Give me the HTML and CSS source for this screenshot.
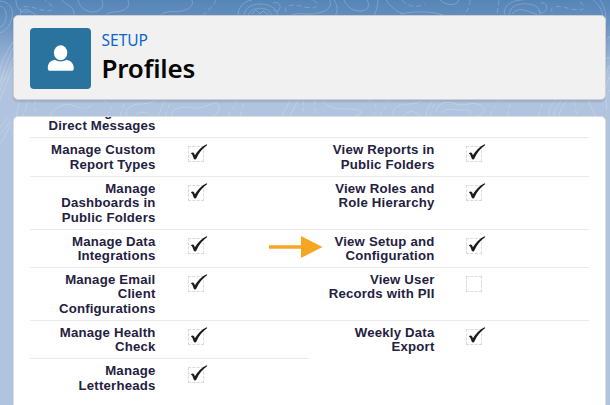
FILE: index.html
```
<!DOCTYPE html>
<html lang="en">
<head>
<meta charset="utf-8">
<title>Profiles</title>
<link rel="stylesheet" href="styles.css">
</head>
<body>
<svg class="contours" viewBox="0 0 610 405" aria-hidden="true">
  <path d="M0 6c5 1 7 7 6 12s-3 8-6 9M0 1c9 1 14 7 12 16s-5 13-12 16M16 0c0 8 4 13 12 12 5-1 7 4 11 4M20 16c1-6 5-8 10-5M78 0c2 7 6 11 14 12 7 0 13-4 10-12M62 0c4 6 13 5 12 16M13 42C7 52 2 60 0 70M13 48C8 60 4 68 0 84M13 57C9 70 5 76 0 91M13 66C9 78 5 86 0 100"/>
  <path d="M105 16c5-6 10-3 16-5 7-2 9-6 7-11M160 16c6-7 15-3 22-5 8-2 12-6 10-11M238 16c0-8 4-14 14-16M244 16c1-8 7-12 16-12s17 4 18 12M248 16c2-7 10-9 17-7 4 1 7 4 7 7M252 14l4-4 4 4 3-3 6 4M273 3c4-2 8 1 7 5s-6 5-6 1M290 16c7-5 18 0 28-3 9-2 14-5 12-13M334 0c4 6 4 11 1 16M344 0c3 7 8 11 17 11 8-1 9-6 6-11M378 0c0 7-2 11-4 16M386 0c5 7 11 13 19 14M400 14c15-3 31-3 43 1M440 0c4 5 17 7 19 0M505 16c-3-9 5-16 18-16M509 16c0-10 9-13 18-12 9 0 14 5 13 12M512 14c5-7 13-4 18-2 4 1 7 2 8 4M541 3c5-1 7 3 5 7s-8 4-7 0M593 0c6 4 9 10 10 16M600 0c6 8 7 19 5 30M610 58h-5M610 65c-3 4-4 10-5 14"/>
  <path d="M16 116c2-8 4-11 2-16M22 116c5-6 3-10 7-16M126 116c0-8 5-12 15-12 7 0 12-2 15-4M135 116c3-5 13-5 16 0M158 116c3-5 4-11 7-16M172 116c0-9 10-10 23-8 9 1 14-5 21-5 6 2 3 10-3 13M50 116c5-10 16-14 25-10 7 3 13 3 17-1M282 116c2-7 8-11 7-16M290 116c4-8 5-11 9-16M323 100c5 7 10 9 23 9 8 0 19 1 14 5l-5 2M393 116c0-8 4-11 14-12 7 0 12-1 15-4M403 116c5-6 12-6 17 0M426 116c1-6 3-12 7-16M436 112c1-9 11-12 20-8 8 3 13-2 22 0 9 3 8 12-3 12M441 113c6-7 13-2 23-3 7-1 7 2 6 6M549 116c-1-6 3-12 7-16M554 116c0-7 4-11 8-16M559 116c1-7 4-10 8-16M588 100c3 6 4 11 8 16M12 121C8 130 5 137 0 143M10 119c-2 7-6 12-10 15M7 116c-1 5-4 9-7 11M605 102c1-9 0-18 5-25M607 110c-1-9-2-15 3-20"/>
  <path class="dashed" d="M14 17c8 13 1 15-2 29M21 13c-3-8 6-7 14-5 8 3 20 5 17-2l-7-6M216 0c-2 7-8 9-13 16M286 12c-3-7 6-8 14-6 7 2 20 4 17-3l-4-3M402 0c6 7 15 8 23 4M470 0c0 8-3 11-7 16M552 12c-3-7 8-6 15-4 7 2 21 4 16-3l-4-5M499 0c-1 7-1 11-3 16M36 100c-2 6-3 9 2 16M104 100l8 8-5 8M120 116l4-12M166 116c0-6 4-10 5-16M228 116c3-8 9-9 8-16M240 116l5-16M304 100c-2 8-1 11 2 16M315 100v16M368 100c9 3 11 10 3 16M380 116c1-6 8-9 8-16M430 116c1-7 4-11 7-16M490 116c3-9 8-10 8-16M507 116l4-14M538 116c3-6 3-12 7-16M574 101l3 15M610 36c-4 5-5 10-5 14"/>
</svg>

<main class="page">
  <header class="card header">
    <div class="tile">
      <svg viewBox="0 0 61 61" aria-hidden="true"><ellipse cx="30.600" cy="24.700" rx="6.700" ry="7.500"/><path d="M17.800 40.200c0-5.400 2.700-7.400 7-8.400 3.700 2.300 7.900 2.300 11.600 0 4.300 1 7.400 3.600 7.400 8.400 0 1.600-.9 2.600-2.400 2.600H20.300c-1.600 0-2.500-1-2.500-2.600z"/></svg>
    </div>
    <div class="heading">
      <div class="eyebrow">SETUP</div>
      <h1>Profiles</h1>
    </div>
  </header>

  <section class="card panel">
    <div class="row first"><div class="cell"><span class="label">Messages and<br>Direct Messages</span></div></div>
    <div class="row">
      <div class="cell"><span class="label">Manage Custom<br>Report Types</span><span class="box"><svg viewBox="0 0 20 18"><use href="#check"/></svg></span></div>
      <div class="cell"><span class="label">View Reports in<br>Public Folders</span><span class="box"><svg viewBox="0 0 20 18"><use href="#check"/></svg></span></div>
    </div>
    <div class="row">
      <div class="cell"><span class="label">Manage<br>Dashboards in<br>Public Folders</span><span class="box"><svg viewBox="0 0 20 18"><use href="#check"/></svg></span></div>
      <div class="cell"><span class="label">View Roles and<br>Role Hierarchy</span><span class="box"><svg viewBox="0 0 20 18"><use href="#check"/></svg></span></div>
    </div>
    <div class="row">
      <div class="cell"><span class="label">Manage Data<br>Integrations</span><span class="box"><svg viewBox="0 0 20 18"><use href="#check"/></svg></span></div>
      <div class="cell"><svg class="arrow" viewBox="0 0 54 22" aria-hidden="true"><path d="M0 9.300h32V0l21.500 11L32 22v-9.300H0z"/></svg><span class="label">View Setup and<br>Configuration</span><span class="box"><svg viewBox="0 0 20 18"><use href="#check"/></svg></span></div>
    </div>
    <div class="row">
      <div class="cell"><span class="label">Manage Email<br>Client<br>Configurations</span><span class="box"><svg viewBox="0 0 20 18"><use href="#check"/></svg></span></div>
      <div class="cell"><span class="label">View User<br>Records with PII</span><span class="box"></span></div>
    </div>
    <div class="row">
      <div class="cell"><span class="label">Manage Health<br>Check</span><span class="box"><svg viewBox="0 0 20 18"><use href="#check"/></svg></span></div>
      <div class="cell last"><span class="label">Weekly Data<br>Export</span><span class="box"><svg viewBox="0 0 20 18"><use href="#check"/></svg></span></div>
    </div>
    <div class="row">
      <div class="cell last"><span class="label">Manage<br>Letterheads</span><span class="box"><svg viewBox="0 0 20 18"><use href="#check"/></svg></span></div>
    </div>
  </section>
</main>

<svg class="defs" aria-hidden="true"><defs><path id="check" d="M2.800 9.200c1.400-1.200 2.800-1 3.400.4l.7 1.600C9.600 6.800 13.500 2.500 18.600.2l.7.9C14.500 4.500 11.200 8.600 8.400 14.600c-.5 1.100-2.100 1.200-2.600.1L4.400 11c-.4-.9-.9-1.200-1.600-1.800z"/></defs></svg>
</body>
</html>
```
FILE: styles.css
```
* { box-sizing: border-box; }

body {
  margin: 0;
  height: 405px;
  overflow: hidden;
  position: relative;
  font-family: "Liberation Sans", Arial, sans-serif;
  background: linear-gradient(#5585b7 0, #6590c0 20px, #b0c4df 78px, #b0c4df 100%);
}

.contours {
  position: absolute;
  inset: 0;
  width: 610px;
  height: 405px;
  fill: none;
  stroke: #fff;
  stroke-width: 1;
  opacity: .21;
}

.dashed { stroke-dasharray: 5 3; }

.defs { position: absolute; width: 0; height: 0; }

.page {
  position: relative;
  display: flex;
  flex-direction: column;
  gap: 16px;
  height: 405px;
  padding: 15px 4px 0 13px;
}

.card {
  border: 1px solid #dedede;
  border-radius: 5px;
}

.header {
  flex: none;
  display: flex;
  gap: 10.500px;
  height: 85px;
  padding: 12px 16px;
  background: #f1f1f1;
  border-color: #cfcfcf;
  box-shadow: 0 2px 2px rgba(0, 0, 0, .12);
}

.tile {
  width: 61px;
  height: 61px;
  border-radius: 4px;
  background: #2a739e;
}

.tile svg { display: block; fill: #fff; }

.heading { font-family: "Noto Sans", "Open Sans", sans-serif; }

.eyebrow {
  margin-top: 1px;
  font-size: 15.500px;
  line-height: 22px;
  color: #0b66c8;
}

h1 {
  margin: 2px 0 0;
  font-size: 26px;
  font-weight: 600;
  line-height: 30px;
  letter-spacing: -.2px;
  font-variant-ligatures: common-ligatures;
  color: #080707;
}

.panel {
  flex: 1;
  margin-bottom: -8px;
  padding: 0 16px;
  overflow: hidden;
  background: #fff;
}

.row {
  display: grid;
  grid-template-columns: 279px 280px;
}

.cell {
  position: relative;
  display: flex;
  gap: 32.500px;
  padding: 5px 0 3.600px;
  border-bottom: 1px solid #ebebeb;
}

.first .cell { grid-column: 1 / -1; margin-top: -17px; }

.last { border-bottom-color: transparent; }

.label {
  width: 125.500px;
  text-align: right;
  white-space: nowrap;
  font-size: 13.200px;
  font-weight: 700;
  line-height: 14.400px;
  letter-spacing: .2px;
  color: #24213f;
}

.box {
  flex: none;
  width: 16px;
  height: 16px;
  margin-top: 3px;
  border: 1px dashed #dadada;
}

.cell + .cell .box { margin-left: -1px; }

.box svg {
  display: block;
  width: 20px;
  height: 18px;
  margin: -3px 0 0 -1.500px;
  overflow: visible;
  fill: #1c1c1c;
}

.arrow {
  position: absolute;
  left: -40px;
  top: 6.500px;
  width: 54px;
  height: 22px;
  fill: #f6a623;
}
```
